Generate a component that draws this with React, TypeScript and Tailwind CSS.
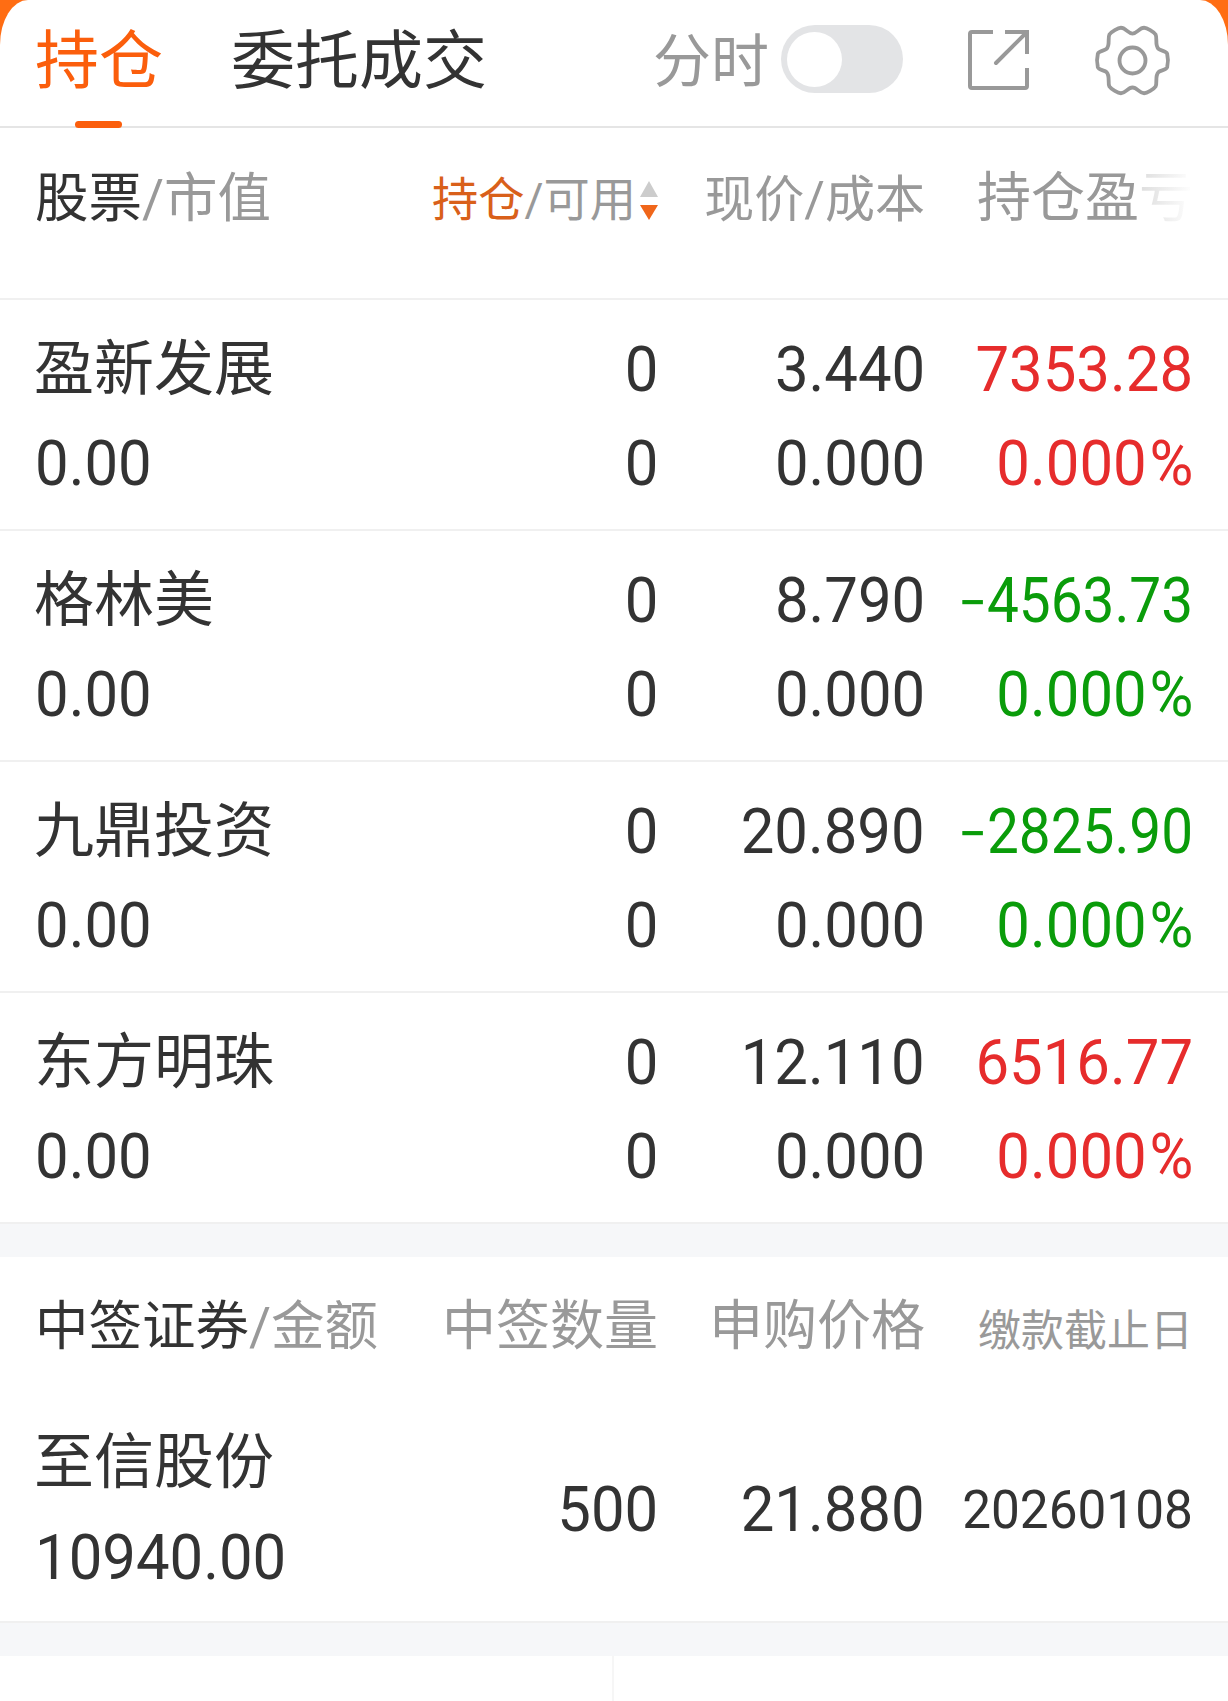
import React from 'react';

interface Holding {
  name: string;
  price: string;
  pnl: string;
  up: boolean;
}

const holdings: Holding[] = [
  { name: '盈新发展', price: '3.440', pnl: '7353.28', up: true },
  { name: '格林美', price: '8.790', pnl: '−4563.73', up: false },
  { name: '九鼎投资', price: '20.890', pnl: '−2825.90', up: false },
  { name: '东方明珠', price: '12.110', pnl: '6516.77', up: true },
];

// digits in the app font are narrower than Roboto
const Num: React.FC<{ children: React.ReactNode; tight?: boolean; left?: boolean }> = ({ children, tight, left }) => (
  <span className={`inline-block whitespace-nowrap ${tight ? 'scale-x-[0.9]' : 'scale-x-[0.95]'} ${left ? 'origin-left' : 'origin-right'}`}>
    {children}
  </span>
);

const Pnl: React.FC<{ value: string }> = ({ value }) =>
  value.startsWith('−') ? (
    <Num tight>
      <span className="text-[56px]">−</span>
      {value.slice(1)}
    </Num>
  ) : (
    <Num>{value}</Num>
  );

const ShareIcon = () => (
  <svg width="64" height="64" viewBox="0 0 64 64" fill="none" stroke="#999999" strokeWidth="4">
    <path d="M27 4H6a2 2 0 0 0-2 2V58a2 2 0 0 0 2 2H59a2 2 0 0 0 2-2V40" />
    <path d="M39 4H61V26" />
    <path d="M30 35L61 4" strokeLinecap="round" />
  </svg>
);

const GearIcon = () => (
  <svg width="77" height="77" viewBox="-40 -40 80 80" fill="none" stroke="#999999" strokeWidth="4">
    <path d="M0 -28C5 -28 7 -34 12 -34C15 -34 22 -30 24 -27C26 -23 23 -16 27 -12C29 -10 35 -10 36 -7C37 -3 37 3 36 7C35 10 29 10 27 12C23 16 26 23 24 27C22 30 15 34 12 34C7 34 5 28 0 28C-5 28 -7 34 -12 34C-15 34 -22 30 -24 27C-26 23 -23 16 -27 12C-29 10 -35 10 -36 7C-37 3 -37 -3 -36 -7C-35 -10 -29 -10 -27 -12C-23 -16 -26 -23 -24 -27C-22 -30 -15 -34 -12 -34C-7 -34 -5 -28 0 -28Z" />
    <circle cx="0" cy="0" r="13.5" />
  </svg>
);

const SortIcon = () => (
  <svg width="18" height="40" viewBox="0 0 18 40" className="ml-[4px] mt-[11px]">
    <path d="M9 0L18 16H0Z" fill="#cccccc" />
    <path d="M0 24H18L9 39Z" fill="#f0661a" />
  </svg>
);

const App: React.FC = () => {
  return (
    <div className="h-[1701px] w-full overflow-hidden bg-[#ff6d13] font-['Roboto','Noto_Sans_CJK_SC',sans-serif] text-[#333333]">
      <div className="h-full rounded-tl-[28px_45px] rounded-tr-[28px_45px] bg-white">
        <div className="relative flex h-[128px] items-center border-b-2 border-[#e5e5e5] pb-[8px]">
          <div className="ml-[35px] mt-[6px] w-[196px] text-[64px] leading-[72px] text-[#fb5e0c]">持仓</div>
          <div className="mt-[6px] text-[64px] leading-[72px]">委托成交</div>
          <div className="ml-auto mr-[12px] mt-[6px] text-[58px] leading-[60px] text-[#999999]">分时</div>
          <div className="flex h-[68px] w-[122px] items-center rounded-full bg-[#e3e4e6] px-[6px]">
            <div className="h-[55px] w-[55px] rounded-full bg-white" />
          </div>
          <div className="ml-[63px] mt-[2px]">
            <ShareIcon />
          </div>
          <div className="ml-[64px] mr-[57px] mt-[2px]">
            <GearIcon />
          </div>
          <div className="absolute bottom-[-2px] left-[75px] h-[7px] w-[47px] rounded-full bg-[#fb5e0c]" />
        </div>

        <div className="grid h-[172px] grid-cols-[minmax(0,1fr)_300px_267px_268px] border-b-2 border-[#f0f0f0] pl-[35px] pr-[35px] pt-[41px] text-[54px] leading-[60px] text-[#999999]">
          <div className="whitespace-nowrap text-[53.5px]">
            <span className="text-[#333333]">股票</span>/市值
          </div>
          <div className="flex justify-end pt-[1px] text-[46.25px]">
            <span className="text-[#d9601a]">持仓</span>/可用
            <SortIcon />
          </div>
          <div className="pt-[1px] text-right text-[50px]">现价/成本</div>
          <div className="text-right">
            持仓盈
            <span className="bg-gradient-to-r from-[#dddddd] to-[#ffffff] bg-clip-text text-transparent">亏</span>
          </div>
        </div>

        {holdings.map((h) => {
          const color = h.up ? 'text-[#e62c2c]' : 'text-[#0a9c0a]';
          return (
            <div
              key={h.name}
              className="grid h-[231px] auto-rows-[94px] grid-cols-[minmax(0,1fr)_300px_267px_268px] border-b-2 border-[#f0f0f0] pl-[35px] pr-[35px] pt-[23px] text-[63px] leading-[94px]"
            >
              <div className="-ml-[1px] text-[60px]">{h.name}</div>
              <div className="text-right"><Num>0</Num></div>
              <div className="text-right"><Num>{h.price}</Num></div>
              <div className={`text-right ${color}`}><Pnl value={h.pnl} /></div>
              <div><Num left>0.00</Num></div>
              <div className="text-right"><Num>0</Num></div>
              <div className="text-right"><Num>0.000</Num></div>
              <div className={`text-right ${color}`}>
                <Num>
                  0.000<span className="ml-[3px]">%</span>
                </Num>
              </div>
            </div>
          );
        })}

        <div className="h-[33px] bg-[#f6f7f9]" />

        <div className="h-[366px] border-b-2 border-[#f0f0f0]">
          <div className="grid h-[157px] grid-cols-[minmax(0,1fr)_300px_267px_268px] pl-[35px] pr-[35px] pt-[40px] text-[54px] leading-[60px] text-[#999999]">
            <div className="whitespace-nowrap text-[53.5px]">
              <span className="text-[#333333]">中签证券</span>/金额
            </div>
            <div className="text-right">中签数量</div>
            <div className="text-right">申购价格</div>
            <div className="pt-[4px] text-right text-[43px]">缴款截止日</div>
          </div>
          <div className="grid grid-cols-[minmax(0,1fr)_300px_267px_268px] pl-[35px] pr-[35px] text-[63px] leading-[96px]">
            <div>
              <div className="-ml-[1px] h-[96px] pt-[1px] text-[60px]">至信股份</div>
              <div><Num left>10940.00</Num></div>
            </div>
            <div className="self-center text-right"><Num>500</Num></div>
            <div className="self-center text-right"><Num>21.880</Num></div>
            <div className="self-center text-right text-[54px]"><Num>20260108</Num></div>
          </div>
        </div>

        <div className="h-[33px] bg-[#f6f7f9]" />

        <div className="flex h-[45px]">
          <div className="w-[614px] border-r-2 border-[#f6f6f6]" />
        </div>
      </div>
    </div>
  );
};

export default App;
